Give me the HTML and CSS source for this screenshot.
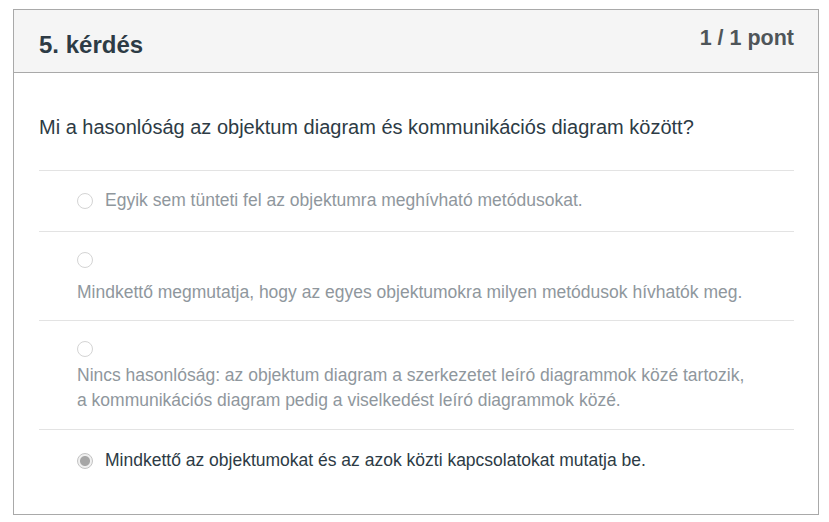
FILE: index.html
```html
<!DOCTYPE html>
<html lang="hu">
<head>
<meta charset="utf-8">
<title>5. kérdés</title>
<link rel="stylesheet" href="styles.css">
</head>
<body>
<div class="question">
  <div class="q-header">
    <h2 class="q-name">5. kérdés</h2>
    <span class="q-points">1 / 1 pont</span>
  </div>
  <div class="q-body">
    <p class="q-text">Mi a hasonlóság az objektum diagram és kommunikációs diagram között?</p>
    <div class="answers">
      <div class="answer">
        <span class="radio"></span>
        <span class="a-text">Egyik sem tünteti fel az objektumra meghívható metódusokat.</span>
      </div>
      <div class="answer stacked gap-lg">
        <span class="radio"></span>
        <span class="a-text">Mindkettő megmutatja, hogy az egyes objektumokra milyen metódusok hívhatók meg.</span>
      </div>
      <div class="answer stacked">
        <span class="radio"></span>
        <span class="a-text">Nincs hasonlóság: az objektum diagram a szerkezetet leíró diagrammok közé tartozik,<br>a kommunikációs diagram pedig a viselkedést leíró diagrammok közé.</span>
      </div>
      <div class="answer selected">
        <span class="radio"></span>
        <span class="a-text">Mindkettő az objektumokat és az azok közti kapcsolatokat mutatja be.</span>
      </div>
    </div>
  </div>
</div>
</body>
</html>
```

FILE: styles.css
```css
* { box-sizing: border-box; }
html, body { margin: 0; background: #fff; }
body {
  padding: 9px 10px 0 13px;
  font-family: "Liberation Sans", Arial, sans-serif;
  color: #2d3b45;
}
.question {
  width: 806px;
  height: 506px;
  border: 1px solid #a9a9a9;
}
.q-header {
  display: flex;
  justify-content: space-between;
  align-items: flex-start;
  height: 63px;
  background: #f5f5f5;
  border-bottom: 1px solid #a9a9a9;
  padding: 0 24px 0 25px;
}
.q-name {
  margin: 0;
  padding-top: 22px;
  font-size: 24px;
  line-height: 26px;
  font-weight: bold;
  color: #2d3b45;
}
.q-points {
  padding-top: 15px;
  font-size: 21.5px;
  line-height: 26px;
  font-weight: bold;
  color: #4f5559;
}
.q-body {
  padding: 0 24px 0 25px;
}
.q-text {
  margin: 0;
  padding-top: 39px;
  padding-bottom: 28px;
  font-size: 20px;
  line-height: 30px;
  color: #2d3b45;
}
.answer {
  display: flex;
  align-items: center;
  gap: 12px;
  padding: 17px 0 18px 38px;
  border-top: 1px solid #e3e3e3;
  font-size: 17.5px;
  line-height: 25px;
  color: #8f979d;
}
.answers .answer:nth-child(3) { border-bottom: 1px solid #e3e3e3; }
.answers .answer:nth-child(4) { border-top: 0; padding-top: 18px; }
.answer.stacked {
  flex-direction: column;
  align-items: flex-start;
  gap: 0;
  padding-top: 20px;
  padding-bottom: 16px;
}
.answer.stacked .radio { margin-bottom: 6px; }
.answer.gap-lg { padding-bottom: 15px; }
.answer.gap-lg .radio { margin-bottom: 12px; }
.radio {
  flex: none;
  width: 16px;
  height: 16px;
  border-radius: 50%;
  border: 1px solid #d4d4d4;
  background: #fff;
}
.answer.selected { color: #2d3b45; }
.answer.selected .radio {
  border: 1px solid #c3c3c3;
  background: radial-gradient(circle, #a6a6a6 0 4.5px, #f0f0f0 5.5px);
}
```
